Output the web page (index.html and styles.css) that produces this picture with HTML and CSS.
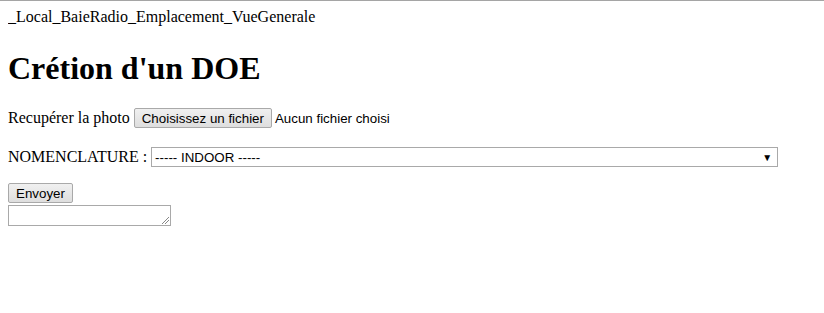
FILE: index.html
```html
<!DOCTYPE html>
<html lang="fr">
<head>
    <meta charset="UTF-8">
    <title>Création DOE</title>
    <link rel="stylesheet" href="styles.css">
</head>
<body>
    <div class="path">_Local_BaieRadio_Emplacement_VueGenerale</div>
    <h1>Crétion d'un DOE</h1>
    <form class="doe-form">
        <p class="photo-row">
            Recupérer la photo
            <span class="file-field">
                <button type="button" class="btn">Choisissez un fichier</button>
                <span class="file-name">Aucun fichier choisi</span>
            </span>
        </p>
        <p class="nomenclature-row">
            NOMENCLATURE :
            <span class="select">
                <span class="select-value">----- INDOOR -----</span>
                <span class="select-arrow">&#9660;</span>
            </span>
        </p>
        <div class="submit-row">
            <button type="button" class="btn">Envoyer</button>
        </div>
        <div class="note"></div>
    </form>
</body>
</html>
```

FILE: styles.css
```css
html {
    border-top: 1px solid #a5a5a5;
}
body {
    margin: 8px;
    margin-top: 7px;
    font-family: "Liberation Serif", serif;
    font-size: 16px;
    color: black;
    background: white;
}
h1 {
    font-size: 32px;
    margin: 24px 0 21px;
}
.doe-form p {
    margin: 16px 0;
}
.doe-form .nomenclature-row {
    margin-top: 19px;
}
.file-field {
    font-family: "Liberation Sans", sans-serif;
    font-size: 13.33px;
}
.btn {
    font-family: "Liberation Sans", sans-serif;
    font-size: 13.33px;
    color: black;
    padding: 1px 7px;
    height: 20px;
    border: 1px solid #a9a9a9;
    border-radius: 2px;
    background: linear-gradient(#f0f0f0, #dedede);
    margin: 0;
}
.file-name {
    margin-left: 0;
}
.select {
    display: inline-flex;
    align-items: center;
    justify-content: space-between;
    box-sizing: border-box;
    width: 627px;
    height: 20px;
    padding: 0 5px 0 3px;
    border: 1px solid #a9a9a9;
    font-family: "Liberation Sans", sans-serif;
    font-size: 13.33px;
    vertical-align: baseline;
}
.select-arrow {
    font-size: 10px;
}
.submit-row {
    line-height: 0;
    margin-top: 1px;
}
.note {
    box-sizing: border-box;
    width: 163px;
    height: 21px;
    margin-top: 2px;
    border: 1px solid #a9a9a9;
    position: relative;
}
.note::after {
    content: "";
    position: absolute;
    right: 1px;
    bottom: 1px;
    width: 7px;
    height: 7px;
    background: linear-gradient(135deg, transparent 45%, #888 45%, #888 52%, transparent 52%, transparent 70%, #888 70%, #888 77%, transparent 77%);
}
```
